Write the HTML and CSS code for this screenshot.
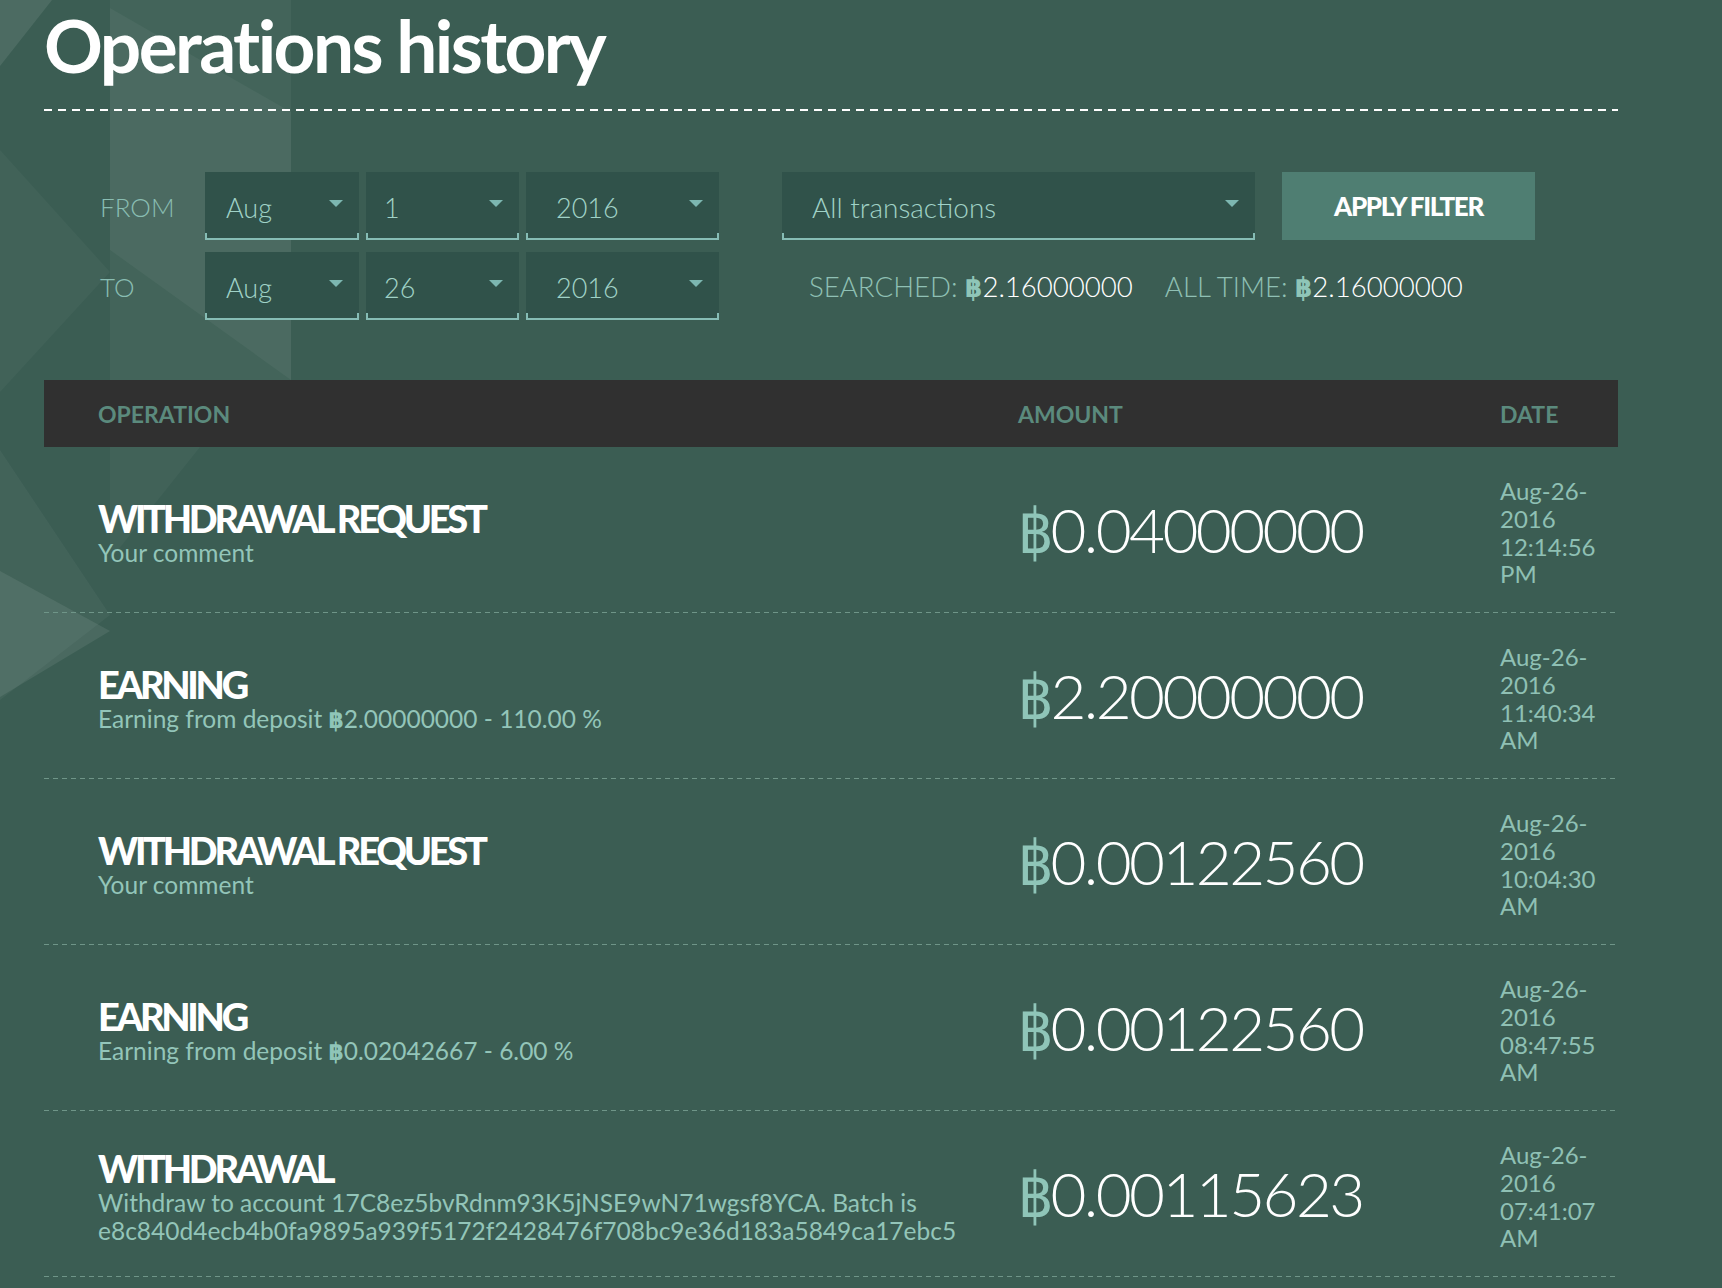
FILE: index.html
```html
<!DOCTYPE html>
<html lang="en">
<head>
<meta charset="utf-8">
<title>Operations history</title>
<link rel="stylesheet" href="styles.css">
</head>
<body>
<svg class="deco" width="330" height="720" viewBox="0 0 330 720" aria-hidden="true">
  <polygon points="0,0 52,0 0,66" fill="#ffffff" fill-opacity="0.09"/>
  <polygon points="110,0 291,0 291,380 110,380" fill="#ffffff" fill-opacity="0.045"/>
  <polygon points="110,8 291,112 291,380 110,250" fill="#ffffff" fill-opacity="0.045"/>
  <polygon points="0,150 110,272 0,392" fill="#ffffff" fill-opacity="0.03"/>
  <polygon points="110,447 200,447 110,560" fill="#ffffff" fill-opacity="0.03"/>
  <polygon points="0,450 110,615 0,700" fill="#ffffff" fill-opacity="0.04"/>
  <polygon points="0,571 110,631 0,697" fill="#ffffff" fill-opacity="0.08"/>
</svg>
<main class="page">
  <h1 class="title">Operations history</h1>
  <div class="rule"></div>

  <section class="filters">
    <div class="dates">
      <div class="lbl">FROM</div>
      <div class="sel"><span>Aug</span><i class="caret"></i></div>
      <div class="sel sel-day"><span>1</span><i class="caret"></i></div>
      <div class="sel sel-year"><span>2016</span><i class="caret"></i></div>
      <div class="lbl">TO</div>
      <div class="sel"><span>Aug</span><i class="caret"></i></div>
      <div class="sel sel-day"><span>26</span><i class="caret"></i></div>
      <div class="sel sel-year"><span>2016</span><i class="caret"></i></div>
    </div>
    <div class="side">
      <div class="sel sel-type"><span>All transactions</span><i class="caret"></i></div>
      <button class="apply">APPLY FILTER</button>
      <div class="stats">
        <span class="stat">SEARCHED: <b><span class="cur">฿</span>2.16000000</b></span>
        <span class="stat">ALL TIME: <b><span class="cur">฿</span>2.16000000</b></span>
      </div>
    </div>
  </section>

  <section class="table">
    <div class="thead">
      <div>OPERATION</div>
      <div>AMOUNT</div>
      <div>DATE</div>
    </div>

    <div class="row">
      <div class="op">
        <div class="op-title">WITHDRAWAL REQUEST</div>
        <div class="op-sub">Your comment</div>
      </div>
      <div class="amount"><span class="cur">฿</span>0.04000000</div>
      <div class="date">Aug-26-2016 12:14:56 PM</div>
    </div>

    <div class="row">
      <div class="op">
        <div class="op-title">EARNING</div>
        <div class="op-sub">Earning from deposit <span class="cur">฿</span>2.00000000 - 110.00 %</div>
      </div>
      <div class="amount"><span class="cur">฿</span>2.20000000</div>
      <div class="date">Aug-26-2016 11:40:34 AM</div>
    </div>

    <div class="row">
      <div class="op">
        <div class="op-title">WITHDRAWAL REQUEST</div>
        <div class="op-sub">Your comment</div>
      </div>
      <div class="amount"><span class="cur">฿</span>0.00122560</div>
      <div class="date">Aug-26-2016 10:04:30 AM</div>
    </div>

    <div class="row">
      <div class="op">
        <div class="op-title">EARNING</div>
        <div class="op-sub">Earning from deposit <span class="cur">฿</span>0.02042667 - 6.00 %</div>
      </div>
      <div class="amount"><span class="cur">฿</span>0.00122560</div>
      <div class="date">Aug-26-2016 08:47:55 AM</div>
    </div>

    <div class="row">
      <div class="op">
        <div class="op-title">WITHDRAWAL</div>
        <div class="op-sub">Withdraw to account 17C8ez5bvRdnm93K5jNSE9wN71wgsf8YCA. Batch is e8c840d4ecb4b0fa9895a939f5172f2428476f708bc9e36d183a5849ca17ebc5</div>
      </div>
      <div class="amount"><span class="cur">฿</span>0.00115623</div>
      <div class="date">Aug-26-2016 07:41:07 AM</div>
    </div>
  </section>
</main>
</body>
</html>
```
FILE: styles.css
```css
html, body {
  margin: 0;
  padding: 0;
}
body {
  background: #3b5d53;
  font-family: Lato, "Open Sans", "DejaVu Sans", sans-serif;
  color: #9dcfc4;
  position: relative;
  width: 1722px;
  min-height: 1288px;
  overflow: hidden;
}
.deco {
  position: absolute;
  left: 0;
  top: 0;
  z-index: 0;
}
.page {
  position: relative;
  z-index: 1;
  width: 1574px;
  padding-left: 44px;
}
.title {
  margin: 0;
  padding-top: 9px;
  font-size: 73px;
  line-height: 73px;
  font-weight: 700;
  letter-spacing: -2.6px;
  color: #ffffff;
}
.rule {
  margin-top: 27px;
  height: 2px;
  background: repeating-linear-gradient(90deg, #ffffff 0 8px, transparent 8px 14px);
}

/* filters */
.filters {
  display: flex;
  margin-top: 61px;
  padding-left: 56px;
}
.dates {
  display: grid;
  grid-template-columns: 98px 154px 153px 193px;
  grid-template-rows: 68px 68px;
  column-gap: 7px;
  row-gap: 12px;
}
.lbl {
  display: flex;
  align-items: center;
  padding-top: 2px;
  font-size: 26px;
  font-weight: 300;
  color: #89bdb2;
}
.sel {
  position: relative;
  box-sizing: border-box;
  display: flex;
  align-items: center;
  justify-content: space-between;
  height: 68px;
  padding: 0 16px 0 21px;
  background: #30524a;
  border-bottom: 2px solid #86bdb5;
  font-size: 27px;
  font-weight: 300;
  color: #a0d2c7;
}
.sel span {
  padding-top: 4px;
}
.sel::after {
  content: "";
  position: absolute;
  left: 0;
  right: 0;
  bottom: -2px;
  height: 7px;
  box-sizing: border-box;
  border-left: 2px solid #86bdb5;
  border-right: 2px solid #86bdb5;
}
.sel-day { padding-left: 18px; }
.sel-year { padding-left: 30px; }
.sel-type { padding-left: 30px; font-size: 28px; }
.caret {
  width: 0;
  height: 0;
  border-left: 7.5px solid transparent;
  border-right: 7.5px solid transparent;
  border-top: 7px solid #7db7b1;
  margin-top: -4px;
}
.side {
  margin-left: 63px;
  display: grid;
  grid-template-columns: 473px 253px;
  grid-template-rows: 68px 68px;
  column-gap: 27px;
  row-gap: 12px;
}
.apply {
  border: 0;
  margin: 0;
  background: #4f7e72;
  color: #ffffff;
  font-family: Lato, "Open Sans", sans-serif;
  font-weight: 900;
  font-size: 26px;
  letter-spacing: -1.4px;
  padding: 0;
}
.stats {
  grid-column: 1 / 3;
  display: flex;
  align-items: center;
  gap: 32px;
  padding-left: 27px;
  padding-top: 2px;
  font-size: 27.6px;
  font-weight: 300;
  color: #8fc0b4;
}
.stats b {
  font-weight: 300;
  color: #ffffff;
}
.cur {
  color: #8fc5b8;
  font-family: "DejaVu Sans Condensed", "DejaVu Sans", sans-serif;
}
.stats .cur {
  font-weight: 700;
}

/* table */
.table {
  margin-top: 60px;
}
.thead {
  display: grid;
  grid-template-columns: 920px 482px 1fr;
  align-items: center;
  height: 67px;
  padding-left: 54px;
  background: #303030;
  font-size: 23px;
  font-weight: 700;
  color: #5b8a7d;
}
.row {
  display: grid;
  grid-template-columns: 920px 482px 1fr;
  align-items: center;
  height: 166px;
  box-sizing: border-box;
  padding-left: 54px;
  padding-bottom: 1px;
  background: repeating-linear-gradient(90deg, #6f9588 0 5px, transparent 5px 9px) left bottom / 100% 1px no-repeat;
}
.op {
  padding-right: 40px;
  margin-top: 6px;
}
.op-title {
  font-size: 38px;
  line-height: 41px;
  font-weight: 900;
  letter-spacing: -3.3px;
  color: #ffffff;
}
.op-sub {
  font-size: 24.5px;
  line-height: 28px;
  font-weight: 400;
  color: #93c5b9;
}
.op-sub .cur {
  font-weight: 700;
}
.amount {
  font-size: 62px;
  font-weight: 300;
  letter-spacing: -2.6px;
  color: #ffffff;
  white-space: nowrap;
}
.amount .cur {
  font-weight: 400;
  letter-spacing: -3px;
}
.date {
  width: 100px;
  margin-top: 6px;
  font-size: 24px;
  line-height: 27.8px;
  color: #8fc0b4;
}
```
